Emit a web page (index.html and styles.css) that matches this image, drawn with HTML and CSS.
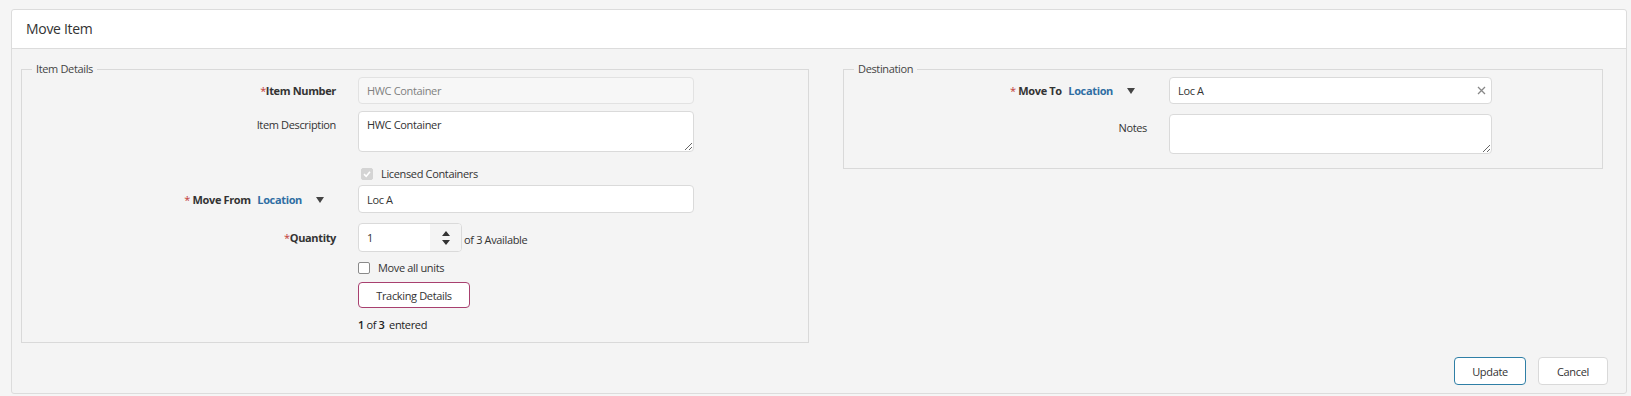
FILE: index.html
```
<!DOCTYPE html>
<html lang="en">
<head>
    <meta charset="UTF-8">
    <meta name="viewport" content="width=device-width, initial-scale=1.0">
    <title>Move Item</title>
    <link rel="stylesheet" href="styles.css">
</head>
<body>
    <div class="card">
        <div class="card-header">Move Item</div>
        <div class="card-body">
            <div class="columns">
                <fieldset class="group item-details">
                    <legend>Item Details</legend>
                    <div class="row row-number">
                        <label class="label strong"><span class="req">*</span>Item Number</label>
                        <input class="field field-disabled" type="text" value="HWC Container" disabled>
                    </div>
                    <div class="row row-desc">
                        <label class="label label-top">Item Description</label>
                        <textarea class="field area">HWC Container</textarea>
                    </div>
                    <div class="row row-licensed">
                        <label class="check check-indent">
                            <span class="box box-disabled">
                                <svg width="10" height="10" viewBox="0 0 10 10"><path d="M2 5.2 L4.2 7.3 L8 2.8" fill="none" stroke="#fff" stroke-width="1.6"/></svg>
                            </span>
                            Licensed Containers
                        </label>
                    </div>
                    <div class="row row-from">
                        <label class="label strong"><span class="req">*</span> Move From <a class="loc">Location</a><span class="caret"><svg width="8" height="6" viewBox="0 0 8 6"><path d="M0 0 H8 L4 6 Z" fill="#444"/></svg></span></label>
                        <input class="field" type="text" value="Loc A">
                    </div>
                    <div class="row row-qty">
                        <label class="label strong"><span class="req">*</span>Quantity</label>
                        <div class="qty">
                            <div class="spin-field">
                                <span class="spin-value">1</span>
                                <span class="spin-btns">
                                    <svg width="8" height="16" viewBox="0 0 8 16"><path d="M4 1 L8 6 H0 Z M0 10 H8 L4 15 Z" fill="#333"/></svg>
                                </span>
                            </div>
                            <span class="avail">of 3 Available</span>
                        </div>
                    </div>
                    <div class="row row-all">
                        <label class="check">
                            <span class="box"></span>
                            Move all units
                        </label>
                    </div>
                    <div class="row row-track">
                        <button class="btn-track" type="button">Tracking Details</button>
                    </div>
                    <div class="row row-entered">
                        <span class="entered"><b>1</b> of <b>3</b> <span class="entered-word">entered</span></span>
                    </div>
                </fieldset>

                <fieldset class="group destination">
                    <legend>Destination</legend>
                    <div class="row row-to">
                        <label class="label strong"><span class="req">*</span> Move To <a class="loc">Location</a><span class="caret"><svg width="8" height="6" viewBox="0 0 8 6"><path d="M0 0 H8 L4 6 Z" fill="#444"/></svg></span></label>
                        <div class="field-wrap">
                            <input class="field" type="text" value="Loc A">
                            <svg class="clear" width="9" height="9" viewBox="0 0 9 9"><path d="M1 1 L8 8 M8 1 L1 8" stroke="#888" stroke-width="1.3"/></svg>
                        </div>
                    </div>
                    <div class="row row-notes">
                        <label class="label label-top">Notes</label>
                        <textarea class="field area area-notes"></textarea>
                    </div>
                </fieldset>
            </div>
            <div class="actions">
                <button class="btn btn-primary" type="button">Update</button>
                <button class="btn" type="button">Cancel</button>
            </div>
        </div>
    </div>
</body>
</html>
```

FILE: styles.css
```
body {
    margin: 0;
    background: #f5f5f5;
    font-family: "Open Sans", sans-serif;
    font-size: 11px;
    letter-spacing: -0.35px;
    color: #333;
}
.card {
    margin: 9px 4px 0 11px;
    border: 1px solid #dcdcdc;
    border-radius: 3px;
    background: #f4f4f4;
}
.card-header {
    height: 38px;
    line-height: 38px;
    padding: 0 14px;
    background: #fff;
    border-bottom: 1px solid #dcdcdc;
    border-radius: 3px 3px 0 0;
    font-size: 14px;
    letter-spacing: -0.3px;
    color: #333;
}
.card-body {
    padding: 12px 18px 8px 9px;
}
.columns {
    display: grid;
    grid-template-columns: 788px 760px;
    column-gap: 34px;
    align-items: start;
}
.group {
    margin: 0;
    padding: 0 0 9px;
    border: 1px solid #d9d9d9;
    min-width: 0;
}
.group legend {
    margin-left: 10px;
    padding: 0 4px;
    line-height: 16px;
    color: #444;
}
.destination {
    padding-bottom: 14px;
}
.row {
    display: grid;
    grid-template-columns: 314px 336px;
    column-gap: 22px;
    align-items: center;
}
.destination .row {
    grid-template-columns: 303px 323px;
}
.row > .check,
.row > .btn-track,
.row > .entered {
    grid-column: 2;
}
.label {
    text-align: right;
    line-height: 16px;
    white-space: nowrap;
}
.label-top {
    align-self: start;
    padding-top: 6px;
}
.strong {
    font-weight: 700;
}
.req {
    color: #c23934;
    font-weight: 400;
}
.loc {
    color: #2f6ea3;
    margin-left: 4px;
}
.caret {
    display: inline-block;
    margin: 0 12px 0 14px;
    vertical-align: 1px;
}
.field {
    box-sizing: border-box;
    display: block;
    width: 100%;
    height: 28px;
    margin: 0;
    padding: 0 8px;
    border: 1px solid #dadada;
    border-radius: 4px;
    background: #fff;
    font: inherit;
    letter-spacing: inherit;
    color: #333;
    outline: none;
}
.field-disabled {
    background: #f7f7f7;
    border-color: #e2e2e2;
    color: #808080;
}
.area {
    height: 41px;
    padding: 5px 8px;
    line-height: 16px;
    resize: vertical;
}
.area-notes {
    height: 40px;
}
.field-wrap {
    position: relative;
}
.clear {
    position: absolute;
    right: 6px;
    top: 9px;
}
.row-number .field {
    height: 27px;
}
.row-to .field {
    height: 27px;
}
.row-desc {
    margin-top: 7px;
}
.row-licensed {
    margin-top: 9px;
    height: 22px;
}
.row-from {
    margin-top: 2px;
}
.row-qty {
    margin-top: 10px;
}
.row-all {
    margin-top: 5px;
    height: 21px;
}
.row-track {
    margin-top: 4px;
}
.row-entered {
    margin-top: 9px;
    height: 16px;
}
.row-notes {
    margin-top: 10px;
}
.check {
    display: flex;
    align-items: center;
    gap: 8px;
    line-height: 16px;
}
.check-indent {
    padding-left: 3px;
}
.box {
    box-sizing: border-box;
    width: 12px;
    height: 12px;
    border: 1px solid #8a8a8a;
    border-radius: 2px;
    background: #fff;
    display: flex;
    align-items: center;
    justify-content: center;
}
.box-disabled {
    background: #d4d4d4;
    border-color: #d4d4d4;
}
.row-licensed .check {
    margin-top: 3px;
}
.qty {
    display: flex;
    align-items: center;
    gap: 2px;
}
.spin-field {
    box-sizing: border-box;
    width: 104px;
    height: 29px;
    display: flex;
    border: 1px solid #dadada;
    border-radius: 4px;
    background: #fff;
    overflow: hidden;
}
.spin-value {
    flex: 1;
    padding-left: 8px;
    line-height: 27px;
}
.spin-btns {
    width: 31px;
    background: #f4f4f4;
    display: flex;
    align-items: center;
    justify-content: center;
}
.avail {
    padding-top: 3px;
}
.btn-track {
    width: 112px;
    height: 26px;
    padding: 0;
    border: 1px solid #a8406f;
    border-radius: 4px;
    background: #fff;
    font: inherit;
    letter-spacing: inherit;
    color: #333;
}
.entered {
    line-height: 16px;
    color: #222;
}
.entered b {
    font-weight: 600;
}
.entered-word {
    margin-left: 2px;
}
.actions {
    display: flex;
    justify-content: flex-end;
    gap: 12px;
    margin-top: 14px;
}
.btn {
    width: 70px;
    height: 28px;
    padding: 0;
    border: 1px solid #d9d9d9;
    border-radius: 4px;
    background: #fff;
    font: inherit;
    letter-spacing: inherit;
    color: #333;
}
.btn-primary {
    width: 72px;
    border-color: #2f7fa6;
}
```
